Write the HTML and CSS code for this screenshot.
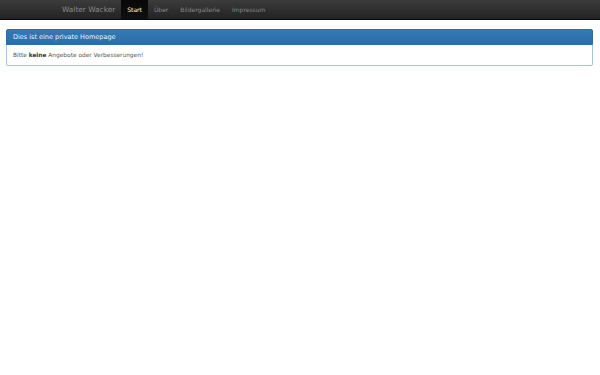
FILE: index.html
```html
<!DOCTYPE html>
<html>
<head>
<meta name="viewport" content="width=device-width, initial-scale=1">
<title>Walter Wacker</title>
<link rel="stylesheet" href="styles.css">
</head>
  <body>
    <nav class="navbar">
      <div class="navbar-inner">
        <a class="brand" href="#">Walter Wacker</a>
        <ul class="nav">
          <li class="active"><a href="#">Start</a></li>
          <li><a href="#">Über</a></li>
          <li><a href="#">Bildergallerie</a></li>
          <li><a href="#">Impressum</a></li>
        </ul>
      </div>
    </nav>
    <div class="container">
      <div class="panel">
        <div class="panel-heading">Dies ist eine private Homepage</div>
        <div class="panel-body">Bitte <b>keine</b> Angebote oder Verbesserungen!</div>
      </div>
    </div>
  </body>
</html>
```

FILE: styles.css
```css
body {
  margin: 0;
  font-family: "DejaVu Sans", Verdana, sans-serif;
  background: #fff;
  color: #555;
}

.navbar {
  height: 20px;
  background: linear-gradient(to bottom, #3c3c3c 0%, #222 100%);
  border-bottom: 1px solid #080808;
  box-sizing: border-box;
}

.navbar-inner {
  display: flex;
  align-items: stretch;
  height: 100%;
  padding-left: 56px;
}

.brand {
  display: flex;
  align-items: center;
  padding: 0 6px;
  font-size: 7.4px;
  color: #8a8a8a;
  text-decoration: none;
}

.nav {
  display: flex;
  list-style: none;
  margin: 0;
  padding: 0;
}

.nav li a {
  display: flex;
  align-items: center;
  height: 100%;
  padding: 0 6px;
  font-size: 6px;
  color: #888;
  text-decoration: none;
}

.nav li.active a {
  background: linear-gradient(to bottom, #080808 0%, #0f0f0f 100%);
  color: #fff;
}

.container {
  padding: 9px 7px 0 6px;
}

.panel {
  border: 1px solid #a9c4e2;
  border-radius: 2px;
  background: #fff;
  box-shadow: 0 1px 1px rgba(0, 0, 0, 0.05);
}

.panel-heading {
  margin: -1px -1px 0;
  height: 16px;
  padding: 0 6px;
  display: flex;
  align-items: center;
  font-size: 6.5px;
  color: #eef3f9;
  background: linear-gradient(to bottom, #337ab7 0%, #2e6da4 100%);
  border: 1px solid #2e6da4;
  border-radius: 2px 2px 0 0;
  box-sizing: border-box;
}

.panel-body {
  padding: 6px;
  font-size: 5.85px;
  line-height: 8px;
}

.panel-body b {
  color: #333;
}
```
